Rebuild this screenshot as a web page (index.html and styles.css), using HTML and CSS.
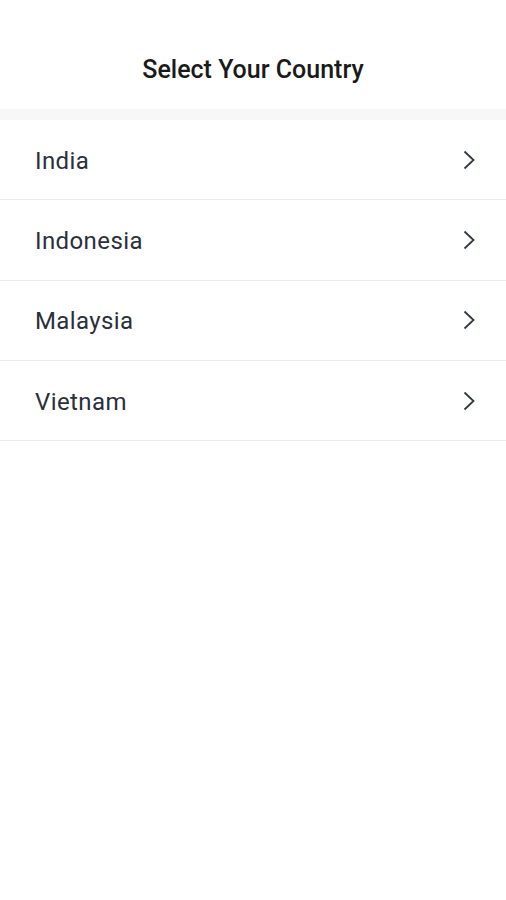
FILE: index.html
```html
<!DOCTYPE html>
<html lang="en">
<head>
  <meta charset="UTF-8" />
  <meta name="viewport" content="width=device-width, initial-scale=1.0" />
  <title>Select Your Country</title>
  <link rel="stylesheet" href="styles.css">
</head>
<body>
  <header class="topbar">
    <h1>Select Your Country</h1>
  </header>
  <div class="band"></div>

  <ul class="countries">
    <li class="country">
      <span>India</span>
      <svg class="chev" viewBox="0 0 12 20" width="12" height="20"><path d="M1.5 1.5 L10.5 10 L1.5 18.5" /></svg>
    </li>
    <li class="country">
      <span>Indonesia</span>
      <svg class="chev" viewBox="0 0 12 20" width="12" height="20"><path d="M1.5 1.5 L10.5 10 L1.5 18.5" /></svg>
    </li>
    <li class="country">
      <span>Malaysia</span>
      <svg class="chev" viewBox="0 0 12 20" width="12" height="20"><path d="M1.5 1.5 L10.5 10 L1.5 18.5" /></svg>
    </li>
    <li class="country">
      <span>Vietnam</span>
      <svg class="chev" viewBox="0 0 12 20" width="12" height="20"><path d="M1.5 1.5 L10.5 10 L1.5 18.5" /></svg>
    </li>
  </ul>
</body>
</html>
```

FILE: styles.css
```css
body {
  margin: 0;
  padding: 0;
  background: #fff;
  font-family: Roboto, 'Noto Sans', sans-serif;
}

.topbar {
  box-sizing: border-box;
  height: 109px;
  padding-top: 30px;
  display: flex;
  align-items: center;
  justify-content: center;
}

.topbar h1 {
  margin: 0;
  font-size: 25px;
  font-weight: 500;
  color: #1a1a1a;
}

.band {
  height: 11px;
  background: #f7f7f7;
}

.countries {
  list-style: none;
  margin: 0;
  padding: 0;
}

.country {
  height: 79.3px;
  display: flex;
  align-items: center;
  justify-content: space-between;
  padding: 0 31px 0 35px;
  border-bottom: 1.5px solid #ececec;
  font-size: 24px;
  letter-spacing: 0.4px;
  color: #2b2f3b;
}

.country span {
  padding-top: 2px;
}

.chev {
  fill: none;
  stroke: #333640;
  stroke-width: 1.8;
}
```
